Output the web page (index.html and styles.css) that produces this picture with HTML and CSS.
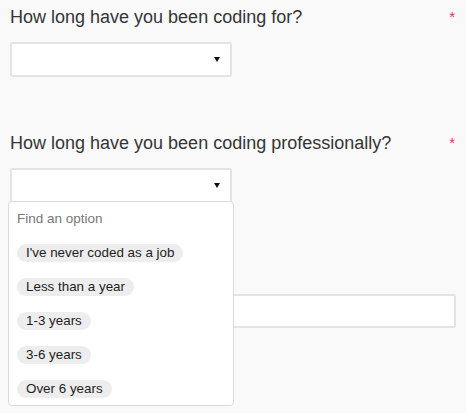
FILE: index.html
```html
<!DOCTYPE html>
<html>
<head>
<meta charset="utf-8">
<link rel="stylesheet" href="styles.css">
</head>
<body>
<div class="form">
  <div class="field">
    <div class="label-row"><span class="label">How long have you been coding for?</span><span class="req">*</span></div>
    <div class="select"><span class="caret"></span></div>
  </div>
  <div class="field field-open">
    <div class="label-row"><span class="label">How long have you been coding professionally?</span><span class="req">*</span></div>
    <div class="select"><span class="caret"></span></div>
    <div class="dropdown">
      <div class="search">Find an option</div>
      <div class="options">
        <span class="chip">I've never coded as a job</span>
        <span class="chip">Less than a year</span>
        <span class="chip">1-3 years</span>
        <span class="chip">3-6 years</span>
        <span class="chip">Over 6 years</span>
      </div>
    </div>
  </div>
  <div class="field field-last">
    <div class="input"></div>
  </div>
</div>
</body>
</html>
```
FILE: styles.css
```css
html, body {
  margin: 0;
  padding: 0;
  background: #f9f9f9;
  font-family: "Liberation Sans", Arial, sans-serif;
}
body {
  min-height: 100vh;
}
.form {
  padding: 6px 10px 0 10px;
  min-height: 413px;
  box-sizing: border-box;
}
.field {
  position: relative;
  margin-bottom: 55px;
}
.field-open {
  margin-bottom: 91px;
  z-index: 2;
}
.field-last {
  margin-bottom: 0;
}
.label-row {
  display: flex;
  justify-content: space-between;
  height: 22px;
  line-height: 22px;
  font-size: 18px;
  color: #353535;
  margin-bottom: 14px;
}
.req {
  color: #e5336b;
  font-size: 15px;
  padding-right: 1px;
}
.select {
  box-sizing: border-box;
  width: 222px;
  height: 35px;
  background: #fff;
  border: 2px solid #e4e4e4;
  border-radius: 2px;
  display: flex;
  align-items: center;
  justify-content: flex-end;
  padding-right: 10px;
}
.caret {
  width: 0;
  height: 0;
  border-left: 3.5px solid transparent;
  border-right: 3.5px solid transparent;
  border-top: 5px solid #111;
}
.dropdown {
  position: absolute;
  z-index: 10;
  top: 69px;
  left: -2px;
  box-sizing: border-box;
  width: 226px;
  height: 205px;
  background: #fff;
  border: 1px solid #dadada;
  border-radius: 4px;
  padding: 8px 8px 7px 8px;
  display: flex;
  flex-direction: column;
  gap: 16px;
}
.search {
  font-size: 13.5px;
  line-height: 18px;
  color: #777;
}
.options {
  display: flex;
  flex-direction: column;
  align-items: flex-start;
  gap: 16px;
}
.chip {
  display: inline-block;
  height: 18px;
  line-height: 18px;
  font-size: 13.4px;
  color: #1e1e1e;
  background: #ededed;
  border-radius: 9px;
  padding: 0 9px;
}
.input {
  box-sizing: border-box;
  height: 34px;
  background: #fff;
  border: 2px solid #e4e4e4;
  border-radius: 2px;
}
```
